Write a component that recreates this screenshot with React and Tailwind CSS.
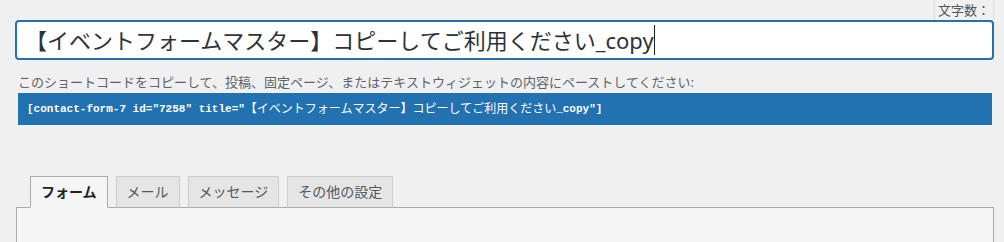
import React from "react";

const jp = { fontFamily: '"Noto Sans", "Noto Sans CJK JP", sans-serif' };
const mono = { fontFamily: '"Liberation Mono", "Noto Sans CJK JP", monospace' };

function Tab({ label, active }) {
  return (
    <div
      className={
        active
          ? "relative z-10 -mb-px h-[32px] px-[10px] flex items-center border border-[#aaaaaa] border-b-[#f5f5f5] bg-[#f5f5f5] text-[14px] font-bold text-[#1d2327]"
          : "relative -mb-px h-[32px] px-[10px] flex items-center border border-[#cccccc] border-b-[#aaaaaa] bg-[#e5e5e5] text-[14px] text-[#50575e]"
      }
      style={jp}
    >
      <span className="leading-[20px] -mt-[1px]">{label}</span>
    </div>
  );
}

export default function App() {
  return (
    <div className="w-[1004px] h-[242px] overflow-hidden bg-[#f0f0f1]" style={jp}>
      <div className="h-[20px] flex justify-end pr-[10px]">
        <div className="w-[60px] h-[20px] border-l border-r border-[#dcdcde] flex items-center justify-center text-[13px] leading-[18px] text-[#50575e]">
          文字数：
        </div>
      </div>
      <div className="ml-[15px] w-[979px] h-[40px] border-2 border-[#2271b1] rounded-[4px] bg-white flex items-center pl-[8px]">
        <span className="text-[22px] leading-[30px] text-[#2c3338] whitespace-nowrap">
          【イベントフォームマスター】コピーしてご利用ください_copy
        </span>
        <span className="inline-block w-px h-[30px] bg-[#1d2327]" />
      </div>
      <div className="mt-[13px] ml-[18px] text-[13px] leading-[18px] text-[#5f6368] whitespace-nowrap">
        このショートコードをコピーして、投稿、固定ページ、またはテキストウィジェットの内容にペーストしてください:
      </div>
      <div className="mt-[2px] ml-[18px] w-[974px] h-[32px] bg-[#2271b1] flex items-center pl-[9px] text-white whitespace-nowrap" style={mono}>
        <span className="text-[11px] leading-[16px] font-semibold">[contact-form-7 id="7258" title="</span>
        <span className="text-[12px] leading-[16px]" style={jp}>【イベントフォームマスター】コピーしてご利用ください</span>
        <span className="text-[11px] leading-[16px] font-semibold">_copy"]</span>
      </div>
      <div className="mt-[51px] ml-[16px] pl-[14px] flex gap-[8px] items-end">
        <Tab label="フォーム" active />
        <Tab label="メール" />
        <Tab label="メッセージ" />
        <Tab label="その他の設定" />
      </div>
      <div className="ml-[16px] w-[978px] h-[60px] border border-[#aaaaaa] bg-[#f5f5f5]" />
    </div>
  );
}
